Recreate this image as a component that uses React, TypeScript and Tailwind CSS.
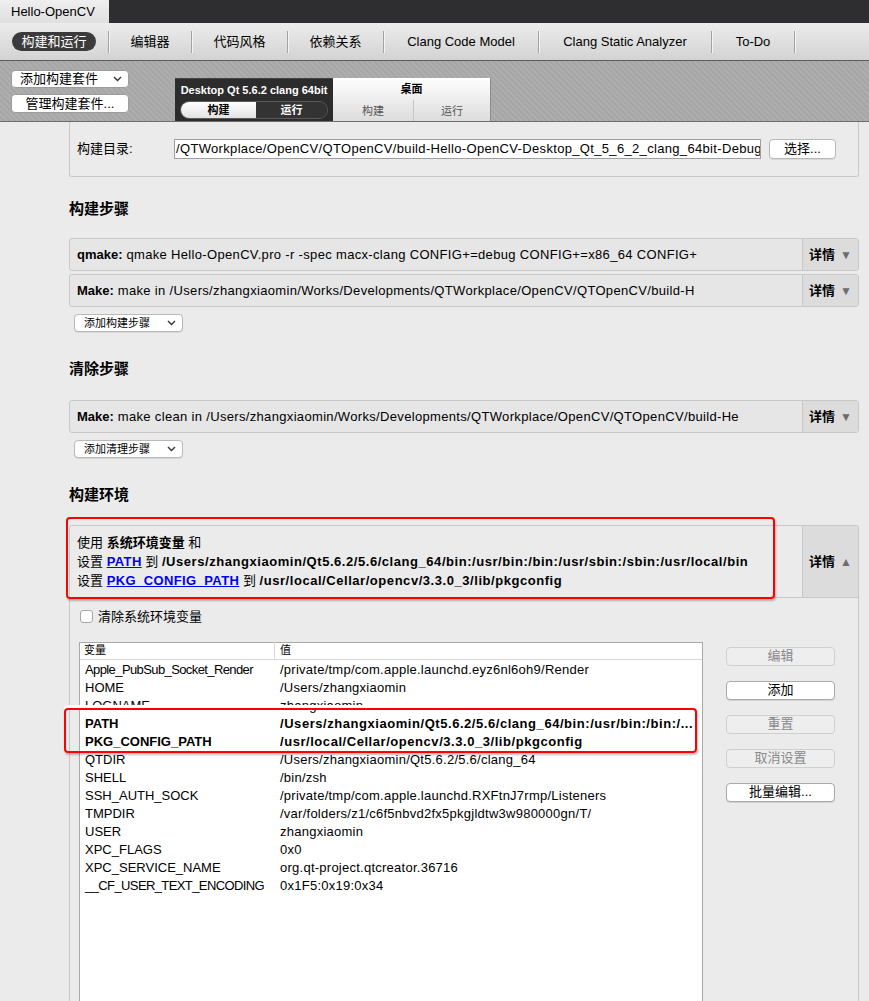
import React from "react";

const FONT = "font-['Liberation_Sans','Noto_Sans_CJK_SC',sans-serif]";

const Chevron = () => (
  <svg width="9" height="6" viewBox="0 0 9 6" className="shrink-0">
    <polyline points="1,1 4.5,4.5 8,1" fill="none" stroke="#333" strokeWidth="1.4" />
  </svg>
);

const tabs = [
  { label: "编辑器", w: "w-[82px]" },
  { label: "代码风格", w: "w-[95px]" },
  { label: "依赖关系", w: "w-[95px]" },
  { label: "Clang Code Model", w: "w-[154px]" },
  { label: "Clang Static Analyzer", w: "w-[172px]" },
  { label: "To-Do", w: "w-[82px]" },
];

const envRows: [string, string, boolean?][] = [
  ["Apple_PubSub_Socket_Render", "/private/tmp/com.apple.launchd.eyz6nl6oh9/Render"],
  ["HOME", "/Users/zhangxiaomin"],
  ["LOGNAME", "zhangxiaomin"],
  ["PATH", "/Users/zhangxiaomin/Qt5.6.2/5.6/clang_64/bin:/usr/bin:/bin:/...", true],
  ["PKG_CONFIG_PATH", "/usr/local/Cellar/opencv/3.3.0_3/lib/pkgconfig", true],
  ["QTDIR", "/Users/zhangxiaomin/Qt5.6.2/5.6/clang_64"],
  ["SHELL", "/bin/zsh"],
  ["SSH_AUTH_SOCK", "/private/tmp/com.apple.launchd.RXFtnJ7rmp/Listeners"],
  ["TMPDIR", "/var/folders/z1/c6f5nbvd2fx5pkgjldtw3w980000gn/T/"],
  ["USER", "zhangxiaomin"],
  ["XPC_FLAGS", "0x0"],
  ["XPC_SERVICE_NAME", "org.qt-project.qtcreator.36716"],
  ["__CF_USER_TEXT_ENCODING", "0x1F5:0x19:0x34"],
];

const sideButtons = [
  { label: "编辑", enabled: false },
  { label: "添加", enabled: true },
  { label: "重置", enabled: false },
  { label: "取消设置", enabled: false },
  { label: "批量编辑...", enabled: true },
];

const Details = ({ up }: { up?: boolean }) => (
  <div className="w-[56px] shrink-0 flex items-center justify-center gap-[5px] bg-[#dcdcdc] border-l border-[#c8c8c8]">
    <span className="font-bold">详情</span>
    <span className="text-[12px] text-[#6c6c6c]">{up ? "▲" : "▼"}</span>
  </div>
);

const StepRow = ({ head, body, w }: { head: string; body: string; w: string }) => (
  <div className="ml-[69px] w-[790px] h-[33px] flex border border-[#c8c8c8] rounded-[3px] bg-[#e6e6e6]">
    <div className="flex-1 flex items-center pl-[7px]">
      <div className={`${w} overflow-hidden whitespace-nowrap tracking-[0.33px]`}>
        <span className="font-bold tracking-normal">{head}</span> {body}
      </div>
    </div>
    <Details />
  </div>
);

const SmallSelect = ({ label }: { label: string }) => (
  <div className="ml-[74px] w-[109px] h-[18px] flex items-center justify-between pl-[9px] pr-[6px] bg-white border border-[#b9b9b9] rounded-[4px] text-[11px] shadow-[0_1px_0_rgba(0,0,0,0.08)]">
    <span>{label}</span>
    <Chevron />
  </div>
);

const Heading = ({ children, mt }: { children: React.ReactNode; mt: string }) => (
  <div className={`${mt} ml-[69px] h-[20px] leading-[20px] text-[15px] font-bold`}>{children}</div>
);

export default function App() {
  return (
    <div className={`${FONT} relative w-[869px] h-[1001px] overflow-hidden bg-[#ebebeb] text-[13px] text-black`}>
      {/* window title tab */}
      <div className="h-[23px] bg-[#2e2e30] flex">
        <div className="w-[109px] h-full bg-linear-to-b from-[#efefef] to-[#dfdfdf] flex items-center pl-[11px]">
          Hello-OpenCV
        </div>
      </div>

      {/* settings tabs */}
      <div className="h-[38px] bg-linear-to-b from-[#ececec] to-[#d3d3d3] border-b border-[#5c5c5c] flex items-center">
        <div className="w-[108px] flex">
          <div className="ml-[12px] w-[84px] h-[19px] rounded-full bg-[#3b3b3b] text-white flex items-center justify-center">
            构建和运行
          </div>
        </div>
        {tabs.map((t) => (
          <React.Fragment key={t.label}>
            <div className="w-px h-[22px] bg-[#a3a3a3] shadow-[1px_0_0_#f4f4f4]" />
            <div className={`${t.w} text-center`}>{t.label}</div>
          </React.Fragment>
        ))}
        <div className="w-px h-[22px] bg-[#a3a3a3] shadow-[1px_0_0_#f4f4f4]" />
      </div>

      {/* kit strip */}
      <div className="h-[61px] flex items-end border-b border-[#6e6e6e] bg-[repeating-linear-gradient(45deg,#aeaeae_0px,#aeaeae_2px,#a6a6a6_2px,#a6a6a6_4px)]">
        <div className="self-start mt-[9px] ml-[11px] w-[118px] flex flex-col gap-[6px]">
          <div className="h-[18px] bg-white rounded-[4px] border border-[#9c9c9c] flex items-center justify-between pl-[8px] pr-[6px]">
            <span>添加构建套件</span>
            <Chevron />
          </div>
          <div className="h-[19px] bg-white rounded-[4px] border border-[#9c9c9c] flex items-center justify-center">
            管理构建套件...
          </div>
        </div>
        <div className="ml-[46px] w-[158px] h-[43px] bg-[#2c2c2c] border-t border-[#444] flex flex-col items-center">
          <div className="h-[22px] leading-[22px] text-[11px] font-bold text-white">Desktop Qt 5.6.2 clang 64bit</div>
          <div className="w-[148px] h-[18px] rounded-full border border-[#5a5a5a] flex overflow-hidden text-[11px] font-bold">
            <div className="w-[75px] bg-linear-to-b from-white to-[#e2e2e2] flex items-center justify-center">构建</div>
            <div className="flex-1 bg-[#333] text-white flex items-center justify-center">运行</div>
          </div>
        </div>
        <div className="w-[158px] h-[43px] bg-linear-to-b from-white to-[#dcdcdc] border-r border-[#8a8a8a] flex flex-col">
          <div className="h-[22px] leading-[22px] text-center text-[11px] font-bold">桌面</div>
          <div className="flex-1 flex text-[11px] text-[#555]">
            <div className="w-[80px] flex items-center justify-center pt-[1px]">构建</div>
            <div className="w-px bg-[#c5c5c5]" />
            <div className="flex-1 flex items-center justify-center pt-[1px]">运行</div>
          </div>
        </div>
      </div>

      {/* build directory panel */}
      <div className="ml-[69px] w-[790px] h-[55px] border-x border-b border-[#c8c8c8] rounded-b-[3px] flex items-center">
        <div className="w-[104px] pl-[7px]">构建目录:</div>
        <div className="w-[587px] h-[20px] bg-white border border-[#9e9e9e] flex items-center pl-[1px] overflow-hidden whitespace-nowrap tracking-[0.33px]">
          /QTWorkplace/OpenCV/QTOpenCV/build-Hello-OpenCV-Desktop_Qt_5_6_2_clang_64bit-Debug
        </div>
        <div className="ml-[8px] w-[67px] h-[20px] bg-white border border-[#b8b8b8] rounded-[4px] flex items-center justify-center shadow-[0_1px_0_rgba(0,0,0,0.08)]">
          选择...
        </div>
      </div>

      <Heading mt="mt-[22px]">构建步骤</Heading>
      <div className="mt-[19px] flex flex-col gap-[3px]">
        <StepRow
          head="qmake:"
          body="qmake Hello-OpenCV.pro -r -spec macx-clang CONFIG+=debug CONFIG+=x86_64 CONFIG+"
          w="w-[630px]"
        />
        <StepRow
          head="Make:"
          body="make in /Users/zhangxiaomin/Works/Developments/QTWorkplace/OpenCV/QTOpenCV/build-H"
          w="w-[630px]"
        />
      </div>
      <div className="mt-[7px]">
        <SmallSelect label="添加构建步骤" />
      </div>

      <Heading mt="mt-[27px]">清除步骤</Heading>
      <div className="mt-[21px]">
        <StepRow
          head="Make:"
          body="make clean in /Users/zhangxiaomin/Works/Developments/QTWorkplace/OpenCV/QTOpenCV/build-He"
          w="w-[680px]"
        />
      </div>
      <div className="mt-[7px]">
        <SmallSelect label="添加清理步骤" />
      </div>

      <Heading mt="mt-[27px]">构建环境</Heading>

      {/* environment panel */}
      <div className="mt-[20px] ml-[69px] w-[790px] h-[500px] border-x border-t border-[#c8c8c8] rounded-t-[3px]">
        <div className="h-[72px] flex border-b border-[#c8c8c8]">
          <div className="flex-1 pl-[7px] pt-[7px] leading-[19px] whitespace-nowrap">
            <div>
              使用 <span className="font-bold">系统环境变量</span> 和
            </div>
            <div>
              设置 <span className="font-bold text-[#0000ee] underline tracking-[0.4px]">PATH</span> 到{" "}
              <span className="font-bold tracking-[0.55px]">/Users/zhangxiaomin/Qt5.6.2/5.6/clang_64/bin:/usr/bin:/bin:/usr/sbin:/sbin:/usr/local/bin</span>
            </div>
            <div>
              设置 <span className="font-bold text-[#0000ee] underline tracking-[0.4px]">PKG_CONFIG_PATH</span> 到{" "}
              <span className="font-bold tracking-[0.55px]">/usr/local/Cellar/opencv/3.3.0_3/lib/pkgconfig</span>
            </div>
          </div>
          <Details up />
        </div>

        <div className="mt-[9px] ml-[10px] flex items-center">
          <div className="w-[13px] h-[13px] bg-white border border-[#a6a6a6] rounded-[3px]" />
          <span className="ml-[5px]">清除系统环境变量</span>
        </div>

        <div className="mt-[15px] flex">
          <div className="ml-[9px] w-[624px] h-[370px] bg-white border border-[#a9a9a9]">
            <div className="h-[17px] flex items-center border-b border-[#d9d9d9] text-[11px]">
              <div className="w-[195px] pl-[4px] border-r border-[#d9d9d9]">变量</div>
              <div className="pl-[5px]">值</div>
            </div>
            <div className="pt-[1px]">
              {envRows.map(([k, v, bold]) => (
                <div key={k} className={`h-[18px] leading-[18px] flex whitespace-nowrap ${bold ? "font-bold" : ""}`}>
                  <div className={`w-[195px] shrink-0 pl-[5px] ${k.length > 22 ? "tracking-[-0.6px]" : ""}`}>{k}</div>
                  <div className={`pl-[5px] overflow-hidden ${bold ? "tracking-[0.55px]" : "tracking-[0.25px]"}`}>{v}</div>
                </div>
              ))}
            </div>
          </div>
          <div className="ml-[23px] mt-[5px] flex flex-col gap-[15px]">
            {sideButtons.map((b) => (
              <div
                key={b.label}
                className={`w-[109px] h-[19px] rounded-[4px] border flex items-center justify-center ${
                  b.enabled
                    ? "bg-white border-[#a9a9a9] text-black shadow-[0_1px_0_rgba(0,0,0,0.1)]"
                    : "bg-[#eeeeee] border-[#cfcfcf] text-[#8a8a8a]"
                }`}
              >
                {b.label}
              </div>
            ))}
          </div>
        </div>
      </div>

      {/* annotation boxes */}
      <div className="absolute left-[66px] top-[517px] w-[709px] h-[82px] border-2 border-[#f00] rounded-[4px] shadow-[1px_2px_2px_rgba(0,0,0,0.25)]" />
      <div className="absolute left-[64px] top-[708px] w-[633px] h-[45px] border-2 border-[#f00] rounded-[4px] shadow-[0_-3px_0_white,1px_2px_2px_rgba(0,0,0,0.25)]" />
    </div>
  );
}
